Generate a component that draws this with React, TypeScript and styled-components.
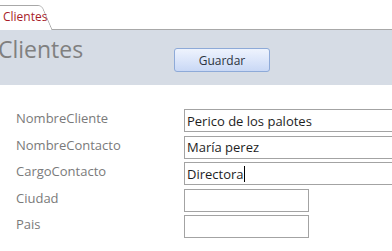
import React from "react";
import styled, { createGlobalStyle } from "styled-components";

const GlobalStyle = createGlobalStyle`
  html, body {
    margin: 0;
    padding: 0;
    background: #ffffff;
    overflow: hidden;
  }
  body {
    font-family: "Open Sans", "Noto Sans", sans-serif;
  }
`;

const Page = styled.div`
  width: 392px;
  height: 251px;
  display: flex;
  flex-direction: column;
  overflow: hidden;
`;

const TabStrip = styled.div`
  height: 30px;
  display: flex;
  align-items: flex-end;
  border-bottom: 1px solid #a8a8a8;
  box-sizing: border-box;
`;

const Tab = styled.div`
  position: relative;
  height: 25px;
  width: 53px;
  margin-bottom: -1px;
  box-sizing: border-box;
  padding: 5px 0 0 3px;
  font-size: 12px;
  color: #a81c28;
  line-height: 14px;
`;

const TabShape = styled.svg`
  position: absolute;
  left: 0;
  top: 0;
  z-index: 0;
`;

const TabLabel = styled.span`
  position: relative;
  z-index: 1;
`;

const Header = styled.div`
  height: 55px;
  background: #d6dce5;
  display: flex;
  align-items: flex-start;
`;

const Title = styled.div`
  width: 176px;
  margin-left: -2px;
  margin-top: 4px;
  font-size: 23px;
  color: #808080;
  line-height: 30px;
  white-space: nowrap;
`;

const SaveButton = styled.button`
  margin-top: 18px;
  width: 96px;
  height: 24px;
  border: 1px solid #8eaad8;
  border-radius: 3px;
  background: linear-gradient(to bottom, #eef3fd 0%, #dce6fa 50%, #c9d8f5 100%);
  font-family: "Open Sans", "Noto Sans", sans-serif;
  font-size: 12px;
  color: #2b3340;
  padding: 0;
  cursor: pointer;
`;

const Form = styled.div`
  display: grid;
  grid-template-columns: 184px 1fr;
  row-gap: 3.5px;
  padding-top: 24px;
`;

const Label = styled.div`
  padding-left: 16px;
  font-size: 13px;
  color: #7a7a7a;
  height: 23px;
  line-height: 19px;
`;

const Field = styled.div<{ $wide?: boolean }>`
  height: 23px;
  width: ${(p) => (p.$wide ? "220px" : "125px")};
  box-sizing: border-box;
  border: 1px solid #a3a3a3;
  font-size: 13px;
  line-height: 20px;
  color: #1e1e1e;
  padding-left: 2px;
  white-space: nowrap;
  display: flex;
  align-items: center;
`;

const Caret = styled.span`
  display: inline-block;
  width: 1px;
  height: 16px;
  background: #000;
`;

const rows = [
  { label: "NombreCliente", value: "Perico de los palotes", wide: true },
  { label: "NombreContacto", value: "María perez", wide: true },
  { label: "CargoContacto", value: "Directora", wide: true, caret: true },
  { label: "Ciudad", value: "", wide: false },
  { label: "Pais", value: "", wide: false },
];

export default function App() {
  return (
    <Page>
      <GlobalStyle />
      <TabStrip>
        <Tab>
          <TabShape width="53" height="25" viewBox="0 0 53 25">
            <path
              d="M0 0.5 L38 0.5 Q41 0.5 42.5 3 L52 25"
              fill="#ffffff"
              stroke="#a8a8a8"
              strokeWidth="1"
            />
            <path d="M0 1 L38 1 Q41 1 42.3 3.5 L51.5 25 L0 25 Z" fill="#ffffff" />
          </TabShape>
          <TabLabel>Clientes</TabLabel>
        </Tab>
      </TabStrip>
      <Header>
        <Title>Clientes</Title>
        <SaveButton>Guardar</SaveButton>
      </Header>
      <Form>
        {rows.map((r) => (
          <React.Fragment key={r.label}>
            <Label>{r.label}</Label>
            <Field $wide={r.wide}>
              {r.value}
              {r.caret ? <Caret /> : null}
            </Field>
          </React.Fragment>
        ))}
      </Form>
    </Page>
  );
}
